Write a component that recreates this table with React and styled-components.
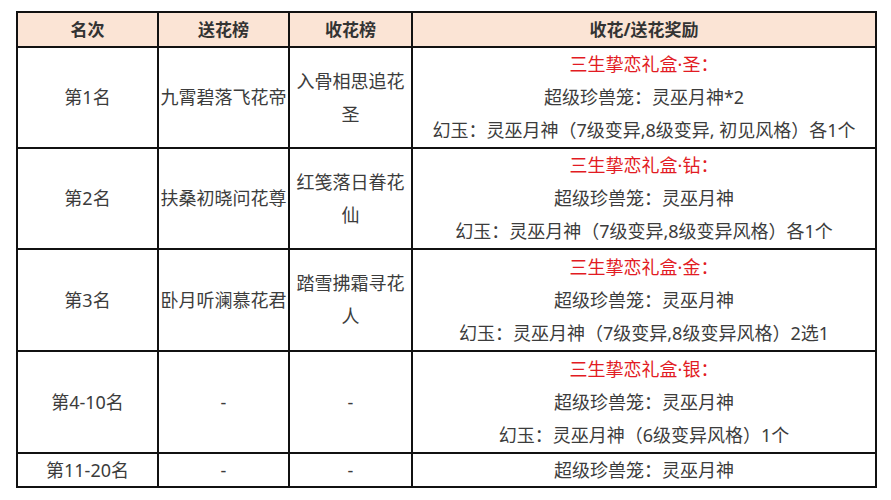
import React from "react";
import styled, { createGlobalStyle } from "styled-components";

const GlobalStyle = createGlobalStyle`
    body {
        margin: 0;
        background: #ffffff;
        font-family: "Noto Sans", "Noto Sans CJK SC", sans-serif;
    }
`;

const Page = styled.div`
    padding: 11px 0 0 16px;
`;

const Table = styled.table`
    width: 861px;
    table-layout: fixed;
    border-collapse: separate;
    border-spacing: 0;
    border-top: 2px solid #111;
    border-left: 2px solid #111;
`;

const Row = styled.tr`
    height: ${(p) => p.h}px;
`;

const Cell = styled.td`
    box-sizing: border-box;
    border-right: 2px solid #111;
    border-bottom: 2px solid #111;
    padding: 0 1px;
    text-align: center;
    vertical-align: middle;
    font-size: 18px;
    line-height: ${(p) => (p.$tight ? 32 : 33)}px;
    color: #3c3c3c;
`;

const HeadCell = styled(Cell).attrs({ as: "th" })`
    background: #fbe4d5;
    font-weight: bold;
    font-size: 17px;
    color: #333;
    line-height: 33px;
`;

const Gift = styled.div`
    color: #e21b23;
`;

const rows = [
    {
        rank: "第1名",
        send: "九霄碧落飞花帝",
        recv: "入骨相思追花圣",
        h: 101,
        gift: "三生挚恋礼盒·圣：",
        lines: ["超级珍兽笼：灵巫月神*2", "幻玉：灵巫月神（7级变异,8级变异, 初见风格）各1个"],
    },
    {
        rank: "第2名",
        send: "扶桑初晓问花尊",
        recv: "红笺落日眷花仙",
        h: 101,
        gift: "三生挚恋礼盒·钻：",
        lines: ["超级珍兽笼：灵巫月神", "幻玉：灵巫月神（7级变异,8级变异风格）各1个"],
    },
    {
        rank: "第3名",
        send: "卧月听澜慕花君",
        recv: "踏雪拂霜寻花人",
        h: 102,
        gift: "三生挚恋礼盒·金：",
        lines: ["超级珍兽笼：灵巫月神", "幻玉：灵巫月神（7级变异,8级变异风格）2选1"],
    },
    {
        rank: "第4-10名",
        send: "-",
        recv: "-",
        h: 102,
        gift: "三生挚恋礼盒·银：",
        lines: ["超级珍兽笼：灵巫月神", "幻玉：灵巫月神（6级变异风格）1个"],
    },
    {
        rank: "第11-20名",
        send: "-",
        recv: "-",
        h: 34,
        gift: null,
        lines: ["超级珍兽笼：灵巫月神"],
    },
];

export default function App() {
    return (
        <Page>
            <GlobalStyle />
            <Table>
                <colgroup>
                    <col style={{ width: 141 }} />
                    <col style={{ width: 131 }} />
                    <col style={{ width: 123 }} />
                    <col style={{ width: 464 }} />
                </colgroup>
                <thead>
                    <Row h={35}>
                        <HeadCell>名次</HeadCell>
                        <HeadCell>送花榜</HeadCell>
                        <HeadCell>收花榜</HeadCell>
                        <HeadCell>收花/送花奖励</HeadCell>
                    </Row>
                </thead>
                <tbody>
                    {rows.map((r) => {
                        const tight = !r.gift;
                        return (
                            <Row key={r.rank} h={r.h}>
                                <Cell $tight={tight}>{r.rank}</Cell>
                                <Cell $tight={tight}>{r.send}</Cell>
                                <Cell $tight={tight}>{r.recv}</Cell>
                                <Cell $tight={tight}>
                                    {r.gift && <Gift>{r.gift}</Gift>}
                                    {r.lines.map((l) => (
                                        <div key={l}>{l}</div>
                                    ))}
                                </Cell>
                            </Row>
                        );
                    })}
                </tbody>
            </Table>
        </Page>
    );
}
